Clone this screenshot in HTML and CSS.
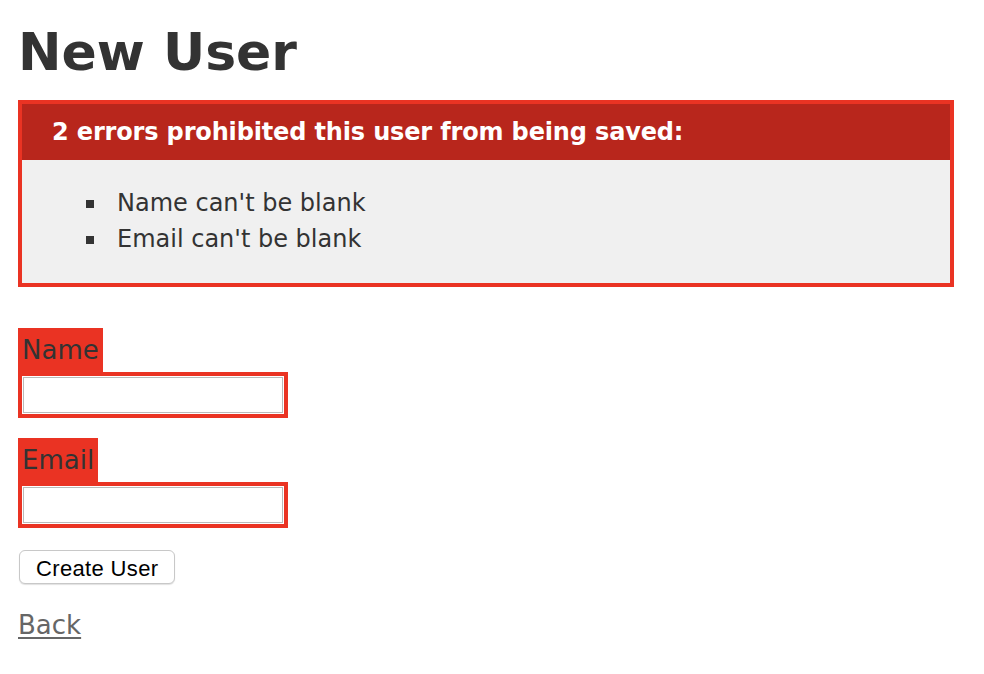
FILE: index.html
```html
<!DOCTYPE html>
<html lang="en">
<head>
<meta charset="utf-8">
<title>New User</title>
<link rel="stylesheet" href="styles.css">
</head>
<body>
<h1 class="title">New User</h1>
<div class="error-explanation">
  <h2 class="error-title">2 errors prohibited this user from being saved:</h2>
  <ul class="error-list">
    <li class="error-item">Name can't be blank</li>
    <li class="error-item">Email can't be blank</li>
  </ul>
</div>
<form class="user-form">
  <div class="field">
    <div class="field-with-errors"><label class="field-label" for="user_name">Name</label></div>
    <div class="field-with-errors"><input class="field-input" type="text" id="user_name"></div>
  </div>
  <div class="field">
    <div class="field-with-errors"><label class="field-label" for="user_email">Email</label></div>
    <div class="field-with-errors"><input class="field-input" type="text" id="user_email"></div>
  </div>
  <div class="actions">
    <button class="submit-button" type="button">Create User</button>
  </div>
</form>
<div class="back"><a class="back-link" href="#">Back</a></div>
</body>
</html>
```
FILE: styles.css
```css
html, body {
  background: #fff;
}
body {
  margin: 0 0 0 18px;
  color: #333;
  font-family: "DejaVu Sans", Verdana, sans-serif;
  font-size: 26px;
  line-height: 36px;
}
.title {
  margin: 22px 0 18px;
  font-size: 52px;
  line-height: 60px;
  font-weight: bold;
}
.error-explanation {
  width: 936px;
  box-sizing: border-box;
  border: 4px solid #ea3323;
  background: #f0f0f0;
}
.error-title {
  margin: 0;
  padding: 10px 10px 10px 30px;
  font-size: 24px;
  line-height: 36px;
  font-weight: bold;
  letter-spacing: -0.15px;
  background: #b8261c;
  color: #fff;
}
.error-list {
  margin: 25px 0 26px;
  padding-left: 64px;
  list-style: none;
}
.error-item {
  font-size: 24px;
  line-height: 36px;
}
.error-item::before {
  content: "";
  display: inline-block;
  width: 8px;
  height: 8px;
  background: #333;
  margin-right: 23px;
  vertical-align: 3px;
}
.user-form {
  margin: 41px 0 0;
  display: flex;
  flex-direction: column;
  align-items: flex-start;
  gap: 20px;
}
.field {
  display: flex;
  flex-direction: column;
  align-items: flex-start;
}
.field-with-errors {
  padding: 4px;
  background: #ea3323;
}
.field-label {
  display: block;
  font-size: 26px;
  line-height: 36px;
}
.field-input {
  display: block;
  width: 262px;
  height: 38px;
  box-sizing: border-box;
  margin: 0;
  padding: 0;
  border: 1px solid #fff;
  box-shadow: inset 0 0 0 1px #bababa;
  background: #fff;
  outline: none;
}
.actions {
  margin-top: 2px;
}
.submit-button {
  display: block;
  margin: 0 0 0 1px;
  height: 34px;
  box-sizing: border-box;
  padding: 3px 16px 0;
  font-family: "Liberation Sans", Arial, sans-serif;
  font-size: 22px;
  line-height: 26px;
  letter-spacing: 0.35px;
  color: #000;
  background: #fff;
  border: 1px solid #c8c8c8;
  border-radius: 6px;
  box-shadow: 0 1px 1px rgba(0, 0, 0, 0.12);
}
.back {
  margin-top: 23px;
  font-size: 26px;
  line-height: 36px;
}
.back-link {
  color: #666;
  text-decoration: underline;
  text-decoration-thickness: 2px;
  text-underline-offset: 3px;
}
```
